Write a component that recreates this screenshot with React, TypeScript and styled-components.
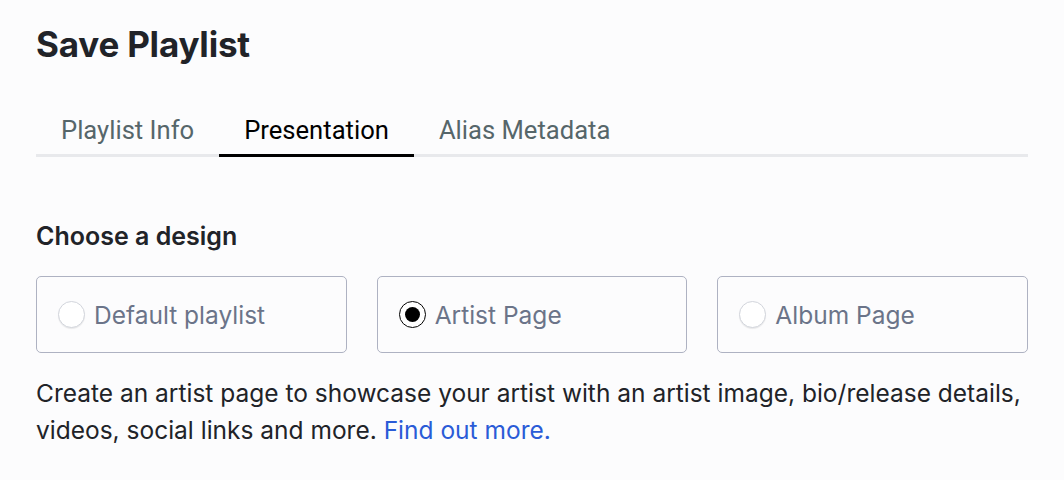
import React, { useState } from "react";
import styled, { createGlobalStyle } from "styled-components";

const Global = createGlobalStyle`
  html, body { margin: 0; padding: 0; background: #fcfcfd; }
  body { font-family: Inter, "Noto Sans", sans-serif; color: #212328; }
`;

const Page = styled.div`
  padding: 24px 36px 0 36px;
  width: 992px;
`;

const Title = styled.h1`
  margin: 0;
  font-size: 35px;
  font-weight: 700;
  line-height: 40px;
  letter-spacing: -0.2px;
  color: #212328;
`;

const TabBar = styled.div`
  display: flex;
  margin-top: 51px;
  border-bottom: 3px solid #e8e9ec;
`;

const Tab = styled.button<{ $active?: boolean }>`
  background: none;
  border: none;
  font-family: Roboto, sans-serif;
  font-size: 25.6px;
  padding: 0 25px 9px 25px;
  line-height: 30px;
  color: ${(p) => (p.$active ? "#000" : "#56666a")};
  margin-bottom: -3px;
  border-bottom: 3px solid ${(p) => (p.$active ? "#000" : "transparent")};
  cursor: pointer;
`;

const SectionLabel = styled.h2`
  margin: 64px 0 0 0;
  font-size: 25px;
  font-weight: 600;
  line-height: 30px;
  color: #212328;
`;

const Options = styled.div`
  display: grid;
  grid-template-columns: repeat(3, 1fr);
  gap: 30px;
  margin-top: 25px;
`;

const Card = styled.label`
  box-sizing: border-box;
  display: flex;
  align-items: center;
  gap: 9px;
  height: 77px;
  padding: 0 21px;
  border: 1px solid #aeb2c2;
  border-radius: 5px;
  background: #fcfcfd;
  cursor: pointer;
`;

const Radio = styled.span<{ $checked?: boolean }>`
  box-sizing: border-box;
  width: 27px;
  height: 27px;
  border-radius: 50%;
  flex: none;
  border: 1px solid ${(p) => (p.$checked ? "#000" : "#d2d5dc")};
  background: #fff;
  box-shadow: ${(p) => (p.$checked ? "none" : "0 1px 1px rgba(0,0,0,0.08)")};
  display: flex;
  align-items: center;
  justify-content: center;
  &::after {
    content: "";
    display: ${(p) => (p.$checked ? "block" : "none")};
    width: 15px;
    height: 15px;
    border-radius: 50%;
    background: #000;
  }
`;

const OptionText = styled.span`
  font-size: 24.5px;
  color: #6b7489;
`;

const Description = styled.p`
  margin: 22px 0 0 0;
  font-size: 24.5px;
  line-height: 37px;
  color: #212328;
`;

const Link = styled.a`
  color: #2a5bd7;
  text-decoration: none;
`;

export default function App() {
  const [tab, setTab] = useState(1);
  const [design, setDesign] = useState(1);
  const tabs = ["Playlist Info", "Presentation", "Alias Metadata"];
  const designs = ["Default playlist", "Artist Page", "Album Page"];
  return (
    <>
      <Global />
      <Page>
        <Title>Save Playlist</Title>
        <TabBar>
          {tabs.map((t, i) => (
            <Tab key={t} $active={tab === i} onClick={() => setTab(i)}>
              {t}
            </Tab>
          ))}
        </TabBar>
        <SectionLabel>Choose a design</SectionLabel>
        <Options>
          {designs.map((d, i) => (
            <Card key={d} onClick={() => setDesign(i)}>
              <Radio $checked={design === i} />
              <OptionText>{d}</OptionText>
            </Card>
          ))}
        </Options>
        <Description>
          Create an artist page to showcase your artist with an artist image, bio/release details,
          videos, social links and more. <Link href="#">Find out more.</Link>
        </Description>
      </Page>
    </>
  );
}
